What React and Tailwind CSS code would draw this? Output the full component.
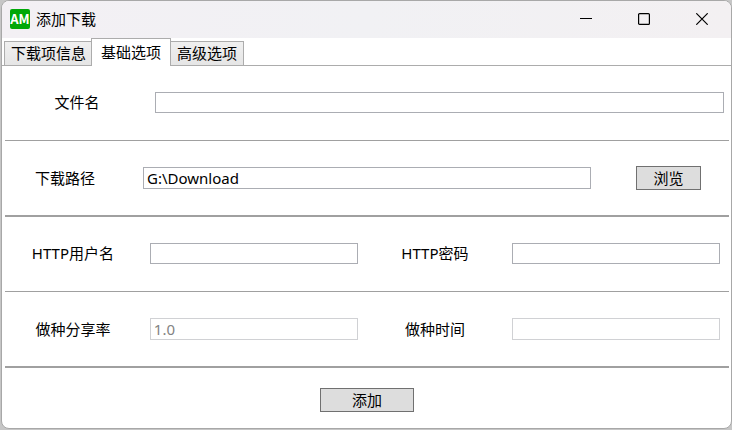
import { useState } from "react";

const tabs = ["下载项信息", "基础选项", "高级选项"];

const inputBase = "w-full min-w-0 border bg-white px-[3px] text-[15px] leading-5 outline-none rounded-none";
const inputOn = `${inputBase} border-[#abadb3] text-black`;
const inputOff = `${inputBase} border-[#d0d1d4] text-[#838383]`;
const buttonBase = "h-6 border border-[#707070] bg-[#dddddd] leading-5 text-black";

function TitleBar() {
  return (
    <header className="flex h-[37px] items-center bg-gradient-to-r from-[#f3f0f4] via-[#f1f1f4] to-[#f3f0f2] pb-[2px] pl-2">
      <span className="flex size-5 items-center justify-center overflow-hidden rounded-[2px] bg-[#00a808] font-['Noto_Sans_CJK_SC',sans-serif] text-[13px] font-bold leading-5 text-white">
        AM
      </span>
      <h1 className="ml-[6px] flex-1">添加下载</h1>
      <button type="button" aria-label="最小化" className="flex h-full w-[58px] items-center justify-center">
        <svg width="12" height="12" viewBox="0 0 12 12" fill="none" stroke="black">
          <path d="M0 5.5H12" />
        </svg>
      </button>
      <button type="button" aria-label="最大化" className="flex h-full w-[58px] items-center justify-center">
        <svg width="12" height="12" viewBox="0 0 12 12" fill="none" stroke="black" strokeWidth="1.2">
          <rect x="0.6" y="0.6" width="10.8" height="10.8" rx="1" />
        </svg>
      </button>
      <button type="button" aria-label="关闭" className="flex h-full w-[58px] items-center justify-center">
        <svg width="12" height="12" viewBox="0 0 12 12" fill="none" stroke="black" strokeWidth="1.2">
          <path d="M0.3 0.3L11.7 11.7M11.7 0.3L0.3 11.7" />
        </svg>
      </button>
    </header>
  );
}

function TabStrip({ active, onSelect }) {
  return (
    <div role="tablist" className="flex h-[27px] items-end pl-[2px]">
      {tabs.map((name, i) => (
        <button
          key={name}
          type="button"
          role="tab"
          aria-selected={i === active}
          onClick={() => onSelect(i)}
          className={
            i === active
              ? "relative -mb-px -ml-px h-7 border border-b-0 border-[#acacac] bg-white px-[9px] pb-px leading-5"
              : "h-6 border border-[#acacac] border-b-0 bg-gradient-to-b from-[#f0f0f0] to-[#e5e5e5] px-[6px] pb-px leading-5 first:border-r-0 last:border-l-0"
          }
        >
          {name}
        </button>
      ))}
    </div>
  );
}

export default function App() {
  const [active, setActive] = useState(1);
  return (
    <div className="flex min-h-screen flex-col bg-[#c6c6c6] pb-px pl-px font-['Noto_Sans','Noto_Sans_CJK_SC',sans-serif] text-[15px] leading-5 text-black">
      <main className="flex flex-1 flex-col overflow-hidden rounded-lg border border-[#a8a8a8] bg-white">
        <TitleBar />
        <TabStrip active={active} onSelect={setActive} />
        <form className="flex flex-1 flex-col border-t border-[#acacac] pl-[3px] pr-[2px]" onSubmit={(e) => e.preventDefault()}>
          <div className="grid h-[75px] grid-cols-[150px_1fr] items-center border-b border-[#a0a0a0] pb-[2px] pr-[5px]">
            <label htmlFor="name" className="pr-[6px] text-center">文件名</label>
            <input id="name" className={`${inputOn} h-[21px]`} />
          </div>
          <div className="grid h-[76px] grid-cols-[138px_1fr_138px] items-center border-b-2 border-[#a0a0a0]">
            <label htmlFor="path" className="pr-[18px] text-center">下载路径</label>
            <input id="path" defaultValue="G:\Download" className={`${inputOn} h-[22px]`} />
            <button type="button" className={`${buttonBase} mr-7 w-[65px] justify-self-end`}>浏览</button>
          </div>
          <div className="grid h-[75px] grid-cols-[2fr_3fr_2fr_3fr] items-center border-b border-[#a0a0a0] pb-[2px]">
            <label htmlFor="user" className="pr-[9px] text-center">HTTP用户名</label>
            <div className="flex pr-[9px]"><input id="user" className={`${inputOn} h-[21px]`} /></div>
            <label htmlFor="pass" className="pr-[9px] text-center">HTTP密码</label>
            <div className="flex pr-[9px]"><input id="pass" className={`${inputOn} h-[21px]`} /></div>
          </div>
          <div className="grid h-[76px] grid-cols-[2fr_3fr_2fr_3fr] items-center border-b-2 border-[#a0a0a0]">
            <label htmlFor="ratio" className="pr-[9px] text-center">做种分享率</label>
            <div className="flex pr-[9px]"><input id="ratio" disabled defaultValue="1.0" className={`${inputOff} h-[22px]`} /></div>
            <label htmlFor="time" className="pr-[9px] text-center">做种时间</label>
            <div className="flex pr-[9px]"><input id="time" disabled className={`${inputOff} h-[22px]`} /></div>
          </div>
          <div className="flex flex-1 items-center justify-center pb-3 pt-4">
            <button type="submit" className={`${buttonBase} w-[94px]`}>添加</button>
          </div>
        </form>
      </main>
    </div>
  );
}
